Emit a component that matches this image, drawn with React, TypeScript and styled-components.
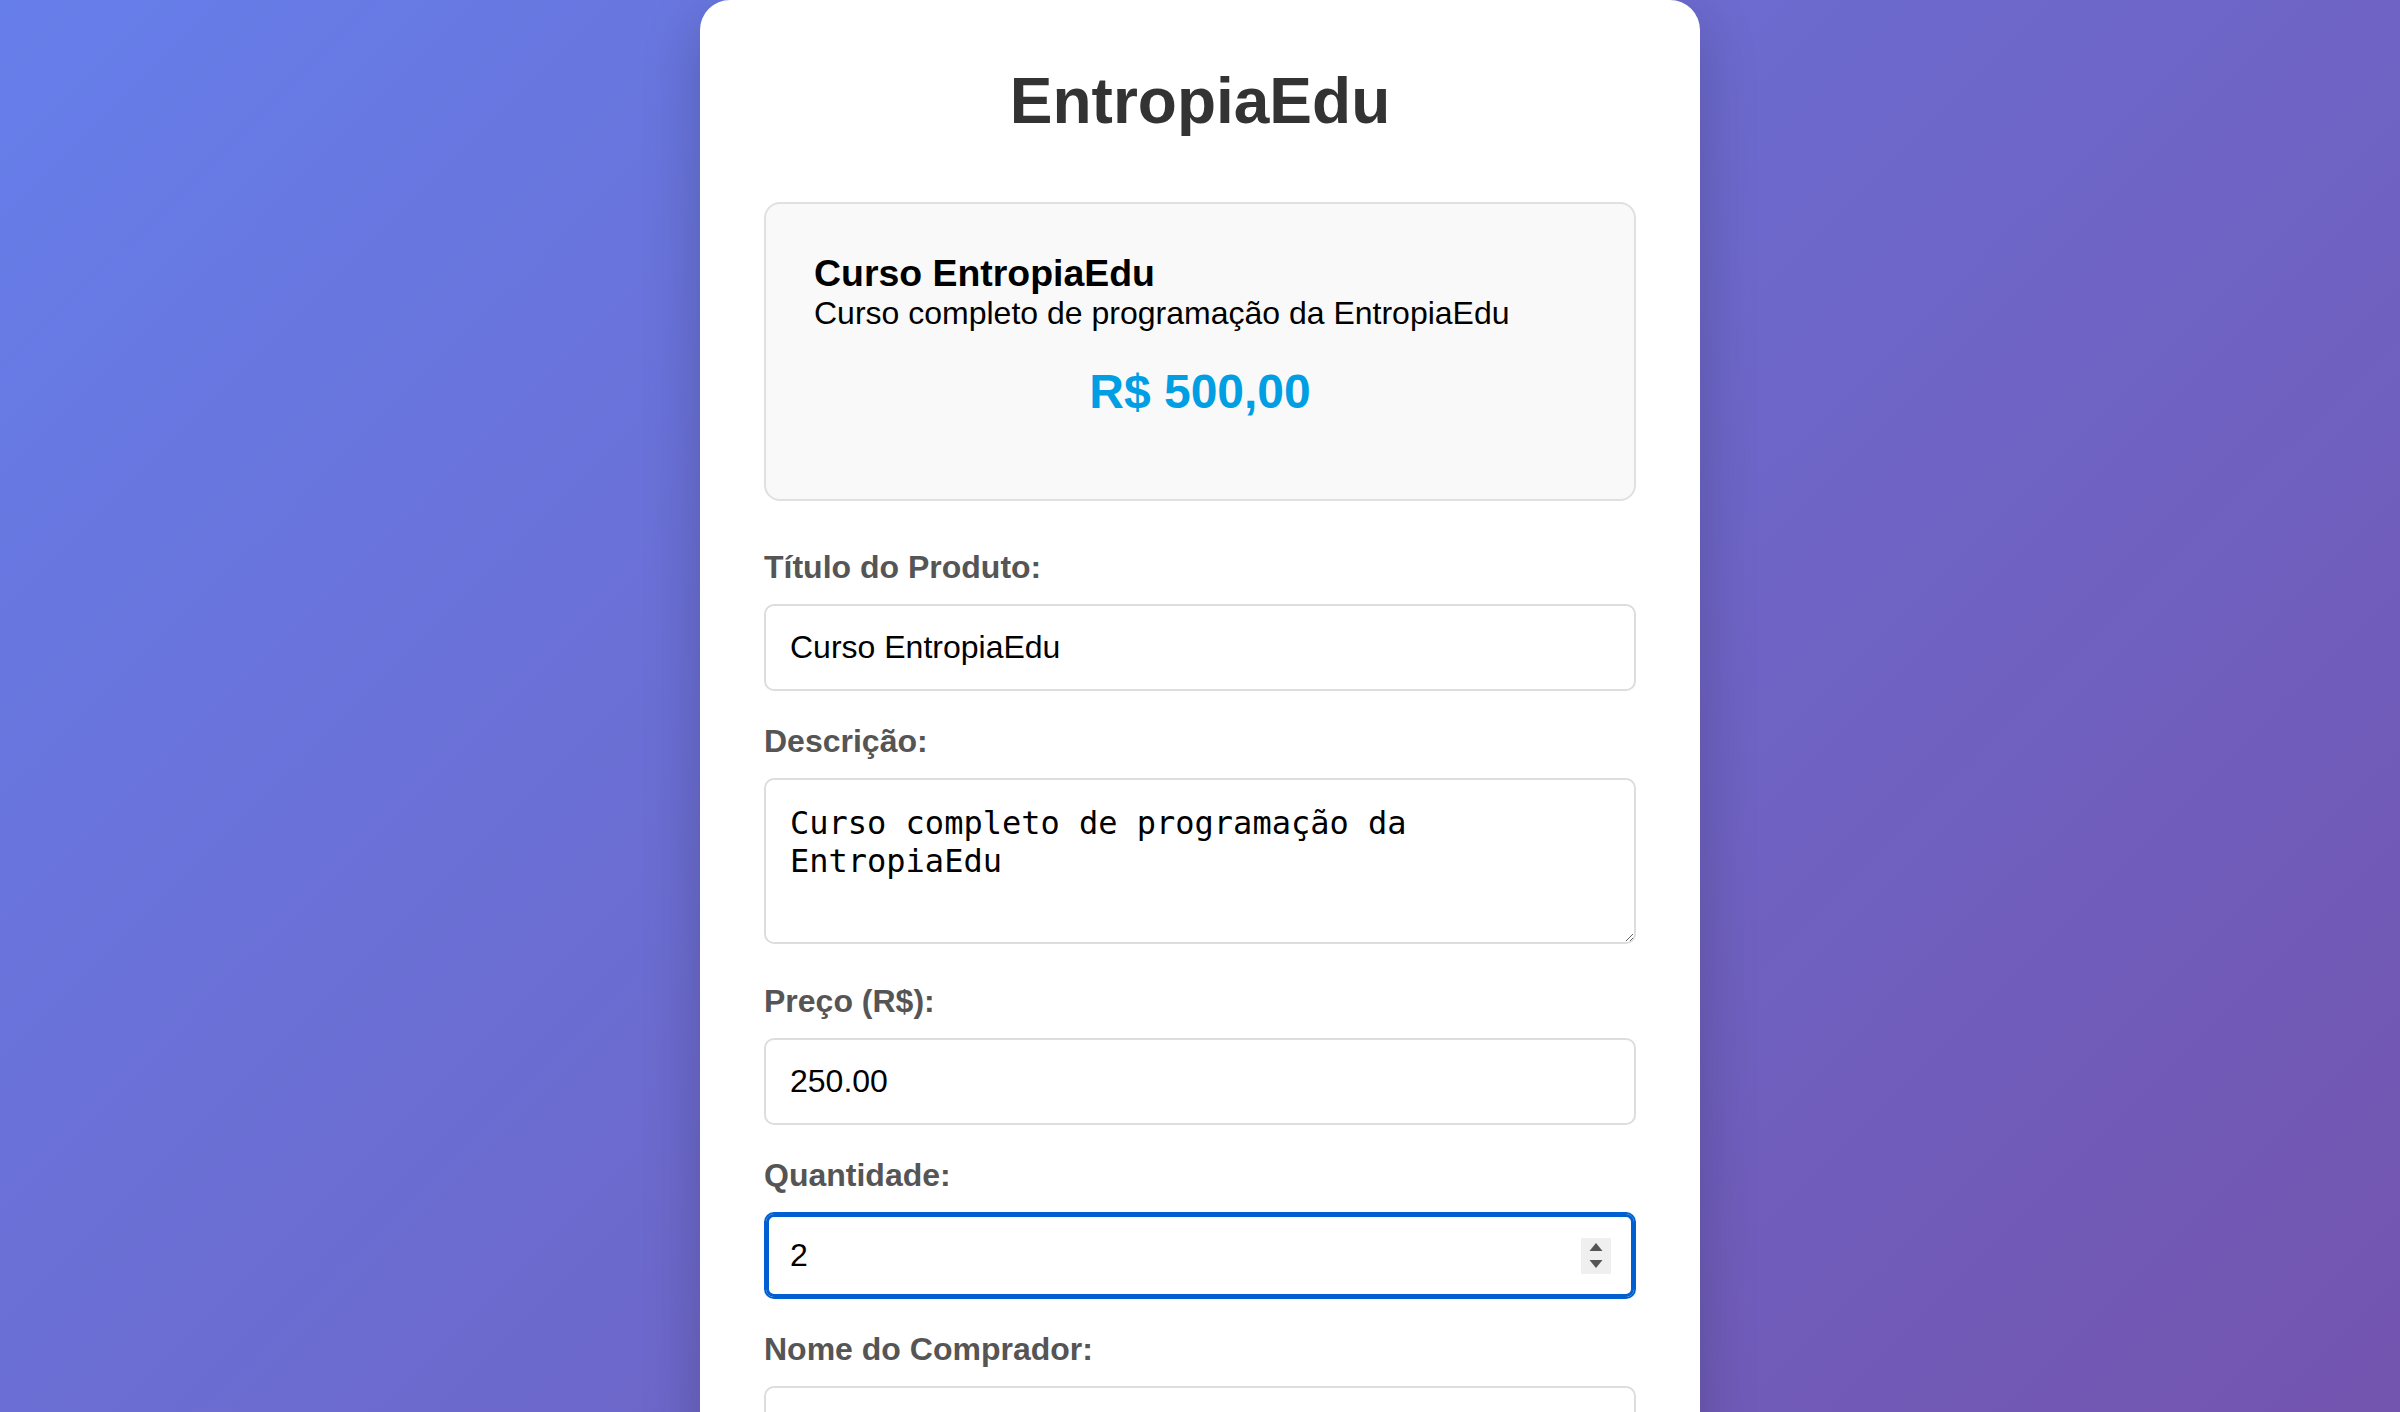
import React from "react";
import styled, { createGlobalStyle } from "styled-components";

const GlobalStyle = createGlobalStyle`
  html, body {
    margin: 0;
    padding: 0;
  }
  body {
    font-family: "Liberation Sans", Arial, Helvetica, sans-serif;
    background: linear-gradient(135deg, #667eea 0%, #764ba2 100%);
    color: #000;
  }
  * {
    box-sizing: border-box;
  }
`;

const Page = styled.div`
  padding: 0 0 40px;
`;

const Card = styled.main`
  max-width: 1000px;
  margin: 0 auto;
  background: #ffffff;
  border-radius: 30px;
  padding: 64px;
  box-shadow: 0 20px 60px rgba(0, 0, 0, 0.2);
`;

const Title = styled.h1`
  margin: 0 0 64px;
  font-size: 64px;
  font-weight: 700;
  line-height: normal;
  color: #333333;
  text-align: center;
`;

const Preview = styled.section`
  background: #f9f9f9;
  border: 2px solid #e0e0e0;
  border-radius: 16px;
  padding: 48px;
  margin-bottom: 48px;
`;

const PreviewTitle = styled.h3`
  margin: 0;
  font-size: 37.44px;
  font-weight: 700;
  line-height: normal;
  color: #000;
`;

const PreviewDesc = styled.p`
  margin: 0;
  font-size: 32px;
  line-height: normal;
  color: #000;
`;

const PreviewPrice = styled.div`
  margin: 32px 0;
  font-size: 48px;
  font-weight: 700;
  line-height: normal;
  color: #009ee3;
  text-align: center;
`;

const FormGroup = styled.div`
  display: flex;
  flex-direction: column;
  margin-bottom: 32px;
`;

const Label = styled.label`
  display: block;
  margin-bottom: 18px;
  font-size: 32px;
  font-weight: 700;
  line-height: normal;
  color: #555555;
`;

const fieldBase = `
  width: 100%;
  padding: 24px;
  border: 2px solid #dddddd;
  border-radius: 10px;
  font-size: 32px;
  color: #000;
  background: #ffffff;
  outline: none;
  margin: 0;
`;

const TextInput = styled.input`
  ${fieldBase}
  line-height: 35px;
  font-family: "Liberation Sans", Arial, Helvetica, sans-serif;
`;

const TextArea = styled.textarea`
  ${fieldBase}
  display: block;
  line-height: normal;
  margin-bottom: 7px;
  font-family: "DejaVu Sans Mono", Menlo, monospace;
`;

const NumberBox = styled.div<{ $focused?: boolean }>`
  display: flex;
  align-items: center;
  width: 100%;
  border: 2px solid ${(p) => (p.$focused ? "#0060d1" : "#dddddd")};
  border-radius: 10px;
  background: #ffffff;
  box-shadow: ${(p) => (p.$focused ? "inset 0 0 0 3px #0060d1" : "none")};
`;

const NumberInput = styled.input`
  flex: 1;
  min-width: 0;
  padding: 24px;
  border: none;
  background: transparent;
  font-family: "Liberation Sans", Arial, Helvetica, sans-serif;
  font-size: 32px;
  line-height: 35px;
  color: #000;
  outline: none;
  margin: 0;
  -moz-appearance: textfield;
  &::-webkit-inner-spin-button,
  &::-webkit-outer-spin-button {
    -webkit-appearance: none;
    margin: 0;
  }
`;

const Spinner = styled.div`
  display: flex;
  width: 30px;
  height: 36px;
  margin-right: 23px;
  background: #efefef;
  flex-shrink: 0;
`;

const SubmitButton = styled.button`
  width: 100%;
  padding: 30px;
  border: none;
  border-radius: 10px;
  background: #009ee3;
  color: #ffffff;
  font-family: "Liberation Sans", Arial, Helvetica, sans-serif;
  font-size: 36px;
  font-weight: 700;
  cursor: pointer;
`;

const SpinArrows = () => (
  <svg width="30" height="36" viewBox="0 0 30 36" aria-hidden="true">
    <polygon points="8.5,13 21.5,13 15,5" fill="#555555" />
    <polygon points="8.5,22 21.5,22 15,30" fill="#555555" />
  </svg>
);

export default function App() {
  return (
    <>
      <GlobalStyle />
      <Page>
        <Card>
          <Title>EntropiaEdu</Title>

          <Preview>
            <PreviewTitle>Curso EntropiaEdu</PreviewTitle>
            <PreviewDesc>Curso completo de programação da EntropiaEdu</PreviewDesc>
            <PreviewPrice>R$ 500,00</PreviewPrice>
          </Preview>

          <FormGroup>
            <Label htmlFor="titulo">Título do Produto:</Label>
            <TextInput id="titulo" type="text" defaultValue="Curso EntropiaEdu" />
          </FormGroup>

          <FormGroup>
            <Label htmlFor="descricao">Descrição:</Label>
            <TextArea
              id="descricao"
              rows={3}
              defaultValue="Curso completo de programação da EntropiaEdu"
            />
          </FormGroup>

          <FormGroup>
            <Label htmlFor="preco">Preço (R$):</Label>
            <TextInput id="preco" type="number" step="0.01" defaultValue="250.00" />
          </FormGroup>

          <FormGroup>
            <Label htmlFor="quantidade">Quantidade:</Label>
            <NumberBox $focused>
              <NumberInput id="quantidade" type="number" min={1} defaultValue={2} />
              <Spinner>
                <SpinArrows />
              </Spinner>
            </NumberBox>
          </FormGroup>

          <FormGroup>
            <Label htmlFor="nome">Nome do Comprador:</Label>
            <TextInput id="nome" type="text" defaultValue="" />
          </FormGroup>

          <FormGroup>
            <Label htmlFor="email">Email do Comprador:</Label>
            <TextInput id="email" type="email" defaultValue="" />
          </FormGroup>

          <FormGroup>
            <Label htmlFor="cpf">CPF do Comprador:</Label>
            <TextInput id="cpf" type="text" defaultValue="" />
          </FormGroup>

          <FormGroup>
            <Label htmlFor="telefone">Telefone:</Label>
            <TextInput id="telefone" type="text" defaultValue="" />
          </FormGroup>

          <SubmitButton type="button">Pagar com Mercado Pago</SubmitButton>
        </Card>
      </Page>
    </>
  );
}
